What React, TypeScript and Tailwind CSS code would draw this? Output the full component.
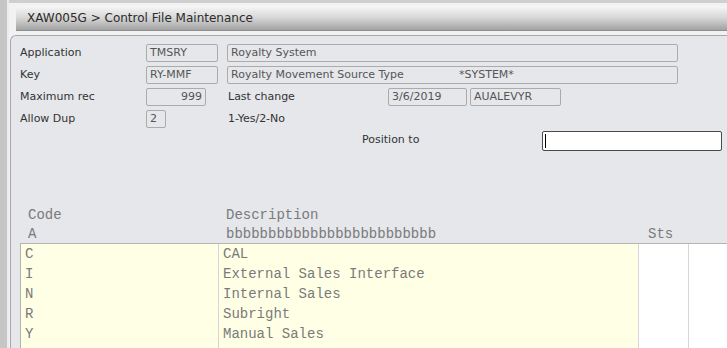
import React from 'react';

const rows = [
  { code: 'C', desc: 'CAL' },
  { code: 'I', desc: 'External Sales Interface' },
  { code: 'N', desc: 'Internal Sales' },
  { code: 'R', desc: 'Subright' },
  { code: 'Y', desc: 'Manual Sales' },
  { code: '', desc: '' },
];

const sans = { fontFamily: '"DejaVu Sans", Verdana, sans-serif' };

function Box({ w, children, right }: { w: string; children?: React.ReactNode; right?: boolean }) {
  return (
    <div
      className={`${w} h-[18px] border border-[#ababab] rounded-[2px] flex items-center px-[3px] text-[11px] text-[#555] ${right ? 'justify-end' : ''}`}
    >
      {children}
    </div>
  );
}

export default function App() {
  return (
    <div className="w-[727px] h-[348px] overflow-hidden flex bg-[#f2f2f2]" style={sans}>
      {/* left gutter */}
      <div className="w-[9px] shrink-0 bg-[#c6c6c6] border-r-2 border-[#ececec]" />

      <div className="flex-1 min-h-0 flex flex-col border-t-[3px] border-[#cfcfcf]">
        {/* title bar */}
        <div className="shrink-0 ml-[7px] mt-[3px] h-[25px] rounded-tl-[4px] border-b border-[#8f8f8f] bg-gradient-to-b from-[#f7f7f7] via-[#d6d6d6] to-[#a2a2a2] flex items-center pl-[11px] text-[12px] text-[#2b2b2b]">
          XAW005G &gt; Control File Maintenance
        </div>

        {/* form panel */}
        <div className="mt-[4px] ml-[1px] flex-1 min-h-0 overflow-hidden bg-[#e5e7eb] border-l border-t border-[#a8a8a8] rounded-tl-[6px] pl-[9px] pt-[6px]">
          <div className="flex items-center h-[22px]">
            <div className="w-[126px] text-[11px] text-[#333]">Application</div>
            <Box w="w-[72px]">TMSRY</Box>
            <div className="ml-[9px]">
              <Box w="w-[451px]">Royalty System</Box>
            </div>
          </div>
          <div className="flex items-center h-[22px]">
            <div className="w-[126px] text-[11px] text-[#333]">Key</div>
            <Box w="w-[72px]">RY-MMF</Box>
            <div className="ml-[9px]">
              <Box w="w-[451px]">
                <span className="w-[228px]">Royalty Movement Source Type</span>
                <span>*SYSTEM*</span>
              </Box>
            </div>
          </div>
          <div className="flex items-center h-[22px]">
            <div className="w-[126px] text-[11px] text-[#333]">Maximum rec</div>
            <Box w="w-[60px]" right>999</Box>
            <div className="ml-[22px] w-[160px] text-[11px] text-[#333]">Last change</div>
            <Box w="w-[79px]">3/6/2019</Box>
            <div className="ml-[3px]">
              <Box w="w-[91px]">AUALEVYR</Box>
            </div>
          </div>
          <div className="flex items-center h-[22px]">
            <div className="w-[126px] text-[11px] text-[#333]">Allow Dup</div>
            <Box w="w-[20px]">2</Box>
            <div className="ml-[62px] text-[11px] text-[#333]">1-Yes/2-No</div>
          </div>
          <div className="flex items-center h-[21px]">
            <div className="ml-[342px] w-[180px] text-[11px] text-[#333]">Position to</div>
            <div className="w-[180px] h-[20px] bg-white border border-[#4a4a4a] rounded-[2px] flex items-center pl-[2px]">
              <div className="w-[1px] h-[14px] bg-black" />
            </div>
          </div>

          {/* grid */}
          <div className="mt-[55px] text-[14px] text-[#7a7a7a]" style={{ fontFamily: '"Liberation Mono", "Courier New", monospace' }}>
            <div className="flex h-[19px] items-center">
              <div className="w-[206px] pl-[8px]">Code</div>
              <div>Description</div>
            </div>
            <div className="flex h-[18px] items-center">
              <div className="w-[206px] pl-[8px]">A</div>
              <div className="w-[422px]">bbbbbbbbbbbbbbbbbbbbbbbbb</div>
              <div>Sts</div>
            </div>
            <div className="border-t border-l border-[#b4b4b4]">
              {rows.map((r, i) => (
                <div key={i} className="flex h-[20px]">
                  <div className="w-[198px] bg-[#ffffe6] border-r border-[#d6d6d6] pl-[4px] pt-[1px] flex items-center">{r.code}</div>
                  <div className="w-[420px] bg-[#ffffe6] border-r border-[#d6d6d6] pl-[4px] pt-[1px] flex items-center">{r.desc}</div>
                  <div className="w-[50px] bg-white border-r border-[#d6d6d6]" />
                  <div className="flex-1 bg-white" />
                </div>
              ))}
            </div>
          </div>
        </div>
      </div>
    </div>
  );
}
